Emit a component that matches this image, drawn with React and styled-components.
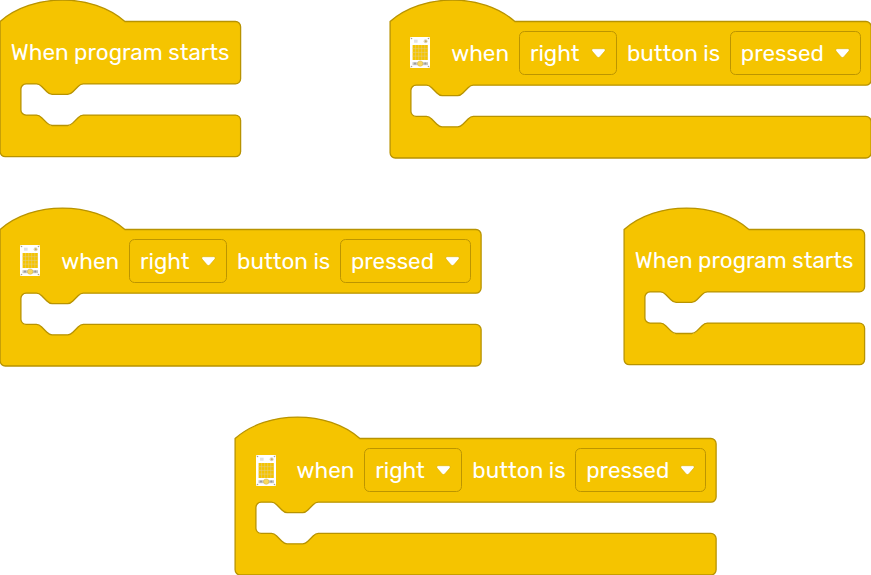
import React from "react";
import styled, { createGlobalStyle } from "styled-components";

const GlobalStyle = createGlobalStyle`
  html, body { margin: 0; background: #fff; overflow: hidden; }
`;

const Workspace = styled.main`
  position: relative;
  width: 871px;
  height: 575px;
  overflow: hidden;
  background: #fff;
  font-family: Rubik, Roboto, sans-serif;
  font-size: 22.45px;
  color: #fff;
`;

const Block = styled.section`
  position: absolute;
  left: ${(p) => p.$x}px;
  top: ${(p) => p.$y}px;
  width: ${(p) => p.$w}px;
  height: 158px;
`;

const Outline = styled.svg`
  position: absolute;
  inset: 0;
  width: 100%;
  height: 100%;
  overflow: visible;
`;

const Row = styled.div`
  position: relative;
  display: flex;
  align-items: center;
  box-sizing: border-box;
  height: ${(p) => p.$h}px;
  margin-top: 21px;
  padding-left: ${(p) => p.$pad}px;
`;

const Label = styled.span`
  flex: none;
  width: ${(p) => (p.$w ? `${p.$w}px` : "auto")};
  padding-top: 2px;
  line-height: 26px;
  white-space: nowrap;
`;

const Dropdown = styled.div`
  flex: none;
  display: flex;
  align-items: center;
  justify-content: space-between;
  box-sizing: border-box;
  width: ${(p) => p.$w}px;
  height: 44px;
  margin: 0 10.4px 0 10px;
  padding: 0 10px;
  border: 1px solid #bc9500;
  border-radius: 5.5px;
`;

const Arrow = styled.svg`
  flex: none;
  width: 15px;
  height: 11px;
  margin-top: 1px;
`;

const Device = styled.svg`
  flex: none;
  width: 20px;
  height: 31px;
  margin: 0 20.8px 0.4px 0;
`;

function Shape({ w, rowHeight }) {
  const u = w / 1.3;
  const notch = "c2 0 3 1 4 2l4 4c1 1 2 2 4 2h12c2 0 3-1 4-2l4-4c1-1 2-2 4-2";
  const notchBack = "c-2 0-3 1-4 2l-4 4c-1 1-2 2-4 2h-12c-2 0-3-1-4-2l-4-4c-1-1-2-2-4-2";
  const d = `M0 0c25-22 71-22 96 0H${u - 4}a4 4 0 0 1 4 4V${rowHeight - 4}a4 4 0 0 1-4 4H64${notchBack}H20a4 4 0 0 0-4 4v16a4 4 0 0 0 4 4h8${notch}H${u - 4}a4 4 0 0 1 4 4v24a4 4 0 0 1-4 4H4a4 4 0 0 1-4-4z`;
  return (
    <Outline aria-hidden="true">
      <path d={d} transform="translate(0.1 21.5) scale(1.3)" fill="#f5c400" stroke="#b89300" strokeWidth="1" />
    </Outline>
  );
}

function DeviceIcon() {
  return (
    <Device viewBox="0 0 20 31" aria-hidden="true">
      <rect width="20" height="31" rx="1" fill="#fff" />
      <g fill="#a9a493">
        <circle cx="1.5" cy="1.5" r=".8" />
        <circle cx="18.5" cy="1.5" r=".8" />
        <circle cx="1.5" cy="29.5" r=".8" />
        <circle cx="18.5" cy="29.5" r=".8" />
      </g>
      <rect x="4" y="2.7" width="3.6" height="3" fill="#e2e2e2" />
      <circle cx="15.6" cy="4.2" r="2" fill="#ddd6bd" />
      <circle cx="15.8" cy="4.2" r="1" fill="#c9ae5b" />
      <rect x="2.6" y="8" width="15.2" height="15" fill="#f5c400" />
      <path d="M5.6 8v15M8.7 8v15M11.7 8v15M14.8 8v15M2.6 11.7h15.2M2.6 15.4h15.2M2.6 19.1h15.2" stroke="#dfcf96" strokeWidth=".5" />
      <path d="M2.5 25.2H18v3H2.5z" fill="#c6c6c2" />
      <circle cx="5" cy="26.6" r="1" fill="#999" />
      <circle cx="15.3" cy="26.6" r="1" fill="#999" />
      <circle cx="10.2" cy="26.6" r="2.7" fill="#f9d85d" stroke="#d3b344" strokeWidth=".5" />
    </Device>
  );
}

function Select({ children, width }) {
  return (
    <Dropdown $w={width}>
      <Label>{children}</Label>
      <Arrow viewBox="0 0 15 11" aria-hidden="true">
        <path d="M2.3.7h10.4c1.4 0 2 1.4 1.1 2.4L9.1 8.6c-1 1.2-2.3 1.2-3.3 0L1.1 3.1C.3 2.1.9.7 2.3.7z" fill="#fff" stroke="#dcb000" strokeWidth=".6" />
      </Arrow>
    </Dropdown>
  );
}

function StartBlock({ x, y }) {
  return (
    <Block $x={x} $y={y} $w={240.5}>
      <Shape w={240.5} rowHeight={48} />
      <Row $h={62.4} $pad={10.6}>
        <Label>When program starts</Label>
      </Row>
    </Block>
  );
}

function ButtonBlock({ x, y }) {
  return (
    <Block $x={x} $y={y} $w={481}>
      <Shape w={481} rowHeight={49} />
      <Row $h={64} $pad={20.4}>
        <DeviceIcon />
        <Label $w={57.7}>when</Label>
        <Select width={97.7}>right</Select>
        <Label $w={92.9}>button is</Label>
        <Select width={131}>pressed</Select>
      </Row>
    </Block>
  );
}

export default function App() {
  return (
    <>
      <GlobalStyle />
      <Workspace>
        <StartBlock x={0.2} y={0} />
        <ButtonBlock x={390} y={0} />
        <ButtonBlock x={0.1} y={208} />
        <StartBlock x={624.2} y={208} />
        <ButtonBlock x={235.4} y={417.4} />
      </Workspace>
    </>
  );
}
